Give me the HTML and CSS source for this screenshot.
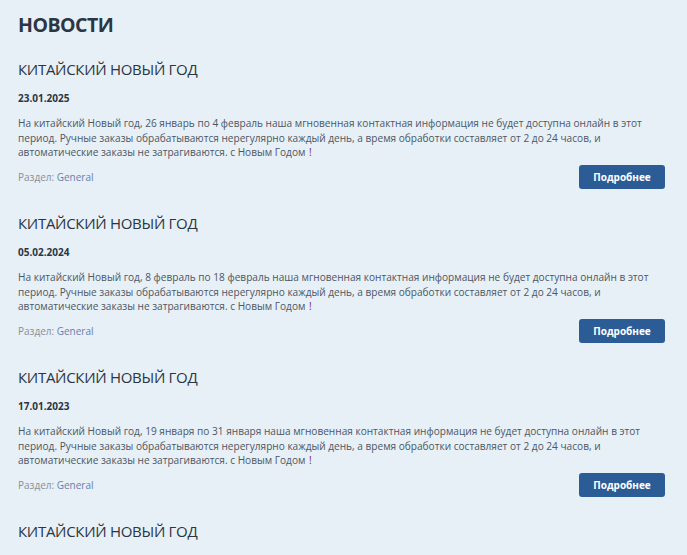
FILE: index.html
```html
<!DOCTYPE html>
<html lang="ru">
<head>
  <meta charset="UTF-8">
  <title>Новости</title>
  <link rel="stylesheet" href="styles.css">
</head>
<body>
<div class="page">
  <h1>НОВОСТИ</h1>

  <div class="news-item">
    <h2>КИТАЙСКИЙ НОВЫЙ ГОД</h2>
    <div class="date">23.01.2025</div>
    <p>На китайский Новый год, 26 январь по 4 февраль наша мгновенная контактная информация не будет доступна онлайн в этот период. Ручные заказы обрабатываются нерегулярно каждый день, а время обработки составляет от 2 до 24 часов, и автоматические заказы не затрагиваются. с Новым Годом <span class="excl">!</span></p>
    <div class="item-footer">
      <div class="section">Раздел: <a href="#">General</a></div>
      <a href="#" class="btn">Подробнее</a>
    </div>
  </div>

  <div class="news-item">
    <h2>КИТАЙСКИЙ НОВЫЙ ГОД</h2>
    <div class="date">05.02.2024</div>
    <p>На китайский Новый год, 8 февраль по 18 февраль наша мгновенная контактная информация не будет доступна онлайн в этот период. Ручные заказы обрабатываются нерегулярно каждый день, а время обработки составляет от 2 до 24 часов, и автоматические заказы не затрагиваются. с Новым Годом <span class="excl">!</span></p>
    <div class="item-footer">
      <div class="section">Раздел: <a href="#">General</a></div>
      <a href="#" class="btn">Подробнее</a>
    </div>
  </div>

  <div class="news-item">
    <h2>КИТАЙСКИЙ НОВЫЙ ГОД</h2>
    <div class="date">17.01.2023</div>
    <p>На китайский Новый год, 19 января по 31 января наша мгновенная контактная информация не будет доступна онлайн в этот период. Ручные заказы обрабатываются нерегулярно каждый день, а время обработки составляет от 2 до 24 часов, и автоматические заказы не затрагиваются. с Новым Годом <span class="excl">!</span></p>
    <div class="item-footer">
      <div class="section">Раздел: <a href="#">General</a></div>
      <a href="#" class="btn">Подробнее</a>
    </div>
  </div>

  <div class="news-item">
    <h2>КИТАЙСКИЙ НОВЫЙ ГОД</h2>
  </div>
</div>
</body>
</html>
```

FILE: styles.css
```css
* { box-sizing: border-box; }
body {
  font-family: 'Open Sans', sans-serif;
  background-color: #e7eff7;
  color: #2b3642;
  margin: 0;
  padding: 0;
}
.page {
  padding: 13px 22px 0 18px;
}
h1 {
  font-size: 19.5px;
  line-height: 24px;
  font-weight: 700;
  letter-spacing: -0.5px;
  margin: 0 0 22px;
  color: #2b3642;
}
.news-item {
  margin-bottom: 24px;
}
h2 {
  font-size: 15px;
  line-height: 20px;
  font-weight: 400;
  letter-spacing: -0.3px;
  margin: 0 0 12px;
  color: #2b3642;
}
.date {
  font-size: 10px;
  line-height: 14px;
  font-weight: 700;
  margin-bottom: 11px;
}
p {
  font-size: 10.1px;
  line-height: 14.5px;
  color: #4d5762;
  margin: 0 0 5.5px;
  padding-right: 10px;
}
.excl {
  color: #7b2d6e;
  margin-left: 1px;
}
.item-footer {
  display: flex;
  justify-content: space-between;
  align-items: center;
}
.section {
  font-size: 10px;
  color: #8a9098;
}
.section a {
  color: #6a7fac;
  text-decoration: none;
}
.btn {
  display: flex;
  align-items: center;
  justify-content: center;
  width: 86px;
  height: 24px;
  background-color: #2b5c95;
  color: white;
  font-size: 10px;
  font-weight: 700;
  border-radius: 3px;
  text-decoration: none;
}
.btn:hover {
  background-color: #234c7c;
}
```
